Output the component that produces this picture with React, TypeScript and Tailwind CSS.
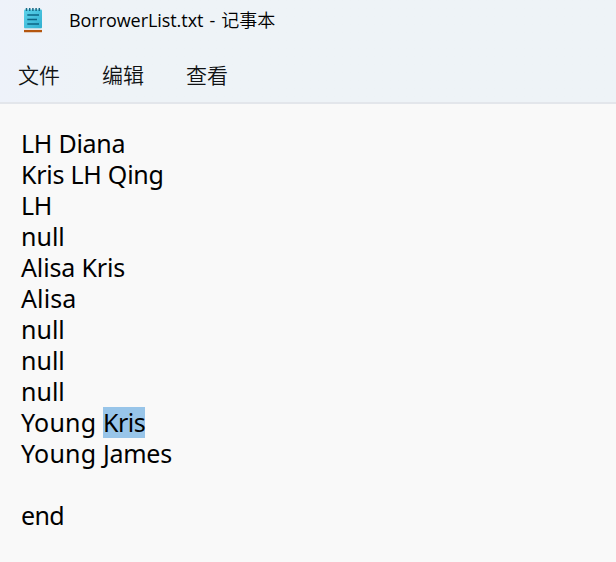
type Run = { text: string; selected?: boolean; spacing: string };

const lines: Run[][] = [
  [{ text: 'LH Diana', spacing: 'tracking-[-0.25px]' }],
  [{ text: 'Kris LH Qing', spacing: 'tracking-[-0.25px]' }],
  [{ text: 'LH', spacing: 'tracking-[-0.3px]' }],
  [{ text: 'null', spacing: 'tracking-[0px]' }],
  [{ text: 'Alisa Kris', spacing: 'tracking-[-0.15px]' }],
  [{ text: 'Alisa', spacing: 'tracking-[0.1px]' }],
  [{ text: 'null', spacing: 'tracking-[0px]' }],
  [{ text: 'null', spacing: 'tracking-[0px]' }],
  [{ text: 'null', spacing: 'tracking-[0px]' }],
  [
    { text: 'Young ', spacing: 'tracking-[0.2px]' },
    { text: 'Kris', selected: true, spacing: 'tracking-[-0.5px]' },
  ],
  [
    { text: 'Young ', spacing: 'tracking-[0.2px]' },
    { text: 'James', spacing: 'tracking-[-0.3px]' },
  ],
  [],
  [{ text: 'end', spacing: 'tracking-[-0.7px]' }],
];

function NotepadIcon() {
  return (
    <svg width="20" height="26" viewBox="0 0 20 26" className="shrink-0">
      <defs>
        <linearGradient id="page" x1="0" y1="0" x2="1" y2="1">
          <stop offset="0" stopColor="#5cd2ea" />
          <stop offset="1" stopColor="#2fafd0" />
        </linearGradient>
      </defs>
      <rect x="1" y="20" width="18" height="5.2" rx="0.5" fill="#b4560f" />
      <rect x="1" y="20" width="18" height="3" fill="#e3e9ec" />
      <rect x="1" y="2.5" width="18" height="18.8" rx="1" fill="url(#page)" />
      <path d="M3.5 1v3M6.7 1v3M9.9 1v3M13.1 1v3M16.3 1v3" stroke="#176a86" strokeWidth="1.5" />
      <path d="M4.3 8h11.7M4.3 12.5h9.7M4.3 17h11.7" stroke="#0d6685" strokeWidth="1.5" />
    </svg>
  );
}

export default function App() {
  return (
    <div className="flex h-[562px] w-[616px] flex-col overflow-hidden bg-[#f9f9f9] font-['Noto_Sans','Noto_Sans_CJK_SC',sans-serif] text-black">
      <header className="h-[104px] shrink-0 border-b-2 border-[#e3e6eb] bg-linear-to-r from-[#eef2fa] from-0% via-[#eef3f7] via-15% to-[#eef3f7]">
        <div className="flex h-10 items-center pl-[23px]">
          <NotepadIcon />
          <h1 className="ml-[26px] whitespace-pre text-[18px] leading-[40px] [word-spacing:1.4px] font-['Open_Sans','Noto_Sans_CJK_SC',sans-serif]">
            <span className="tracking-[-0.06px]">BorrowerList.txt - </span>
            <span className="font-[350]">记事本</span>
          </h1>
        </div>
        <nav className="flex h-[62px] gap-[42px] pt-4 pl-[18px] text-[21px] leading-[36px] font-[350] font-['Noto_Sans_CJK_SC',sans-serif] text-[#101214]">
          <span>文件</span>
          <span>编辑</span>
          <span>查看</span>
        </nav>
      </header>
      <main className="pt-6 pl-[21px] text-[25px] leading-[31px]">
        {lines.map((runs, i) => (
          <div key={i} className="flex h-[31px] whitespace-pre">
            {runs.map((run) => (
              <span key={run.text} className={`${run.spacing} ${run.selected ? 'bg-[#98c5e9]' : ''}`}>
                {run.text}
              </span>
            ))}
          </div>
        ))}
      </main>
    </div>
  );
}
